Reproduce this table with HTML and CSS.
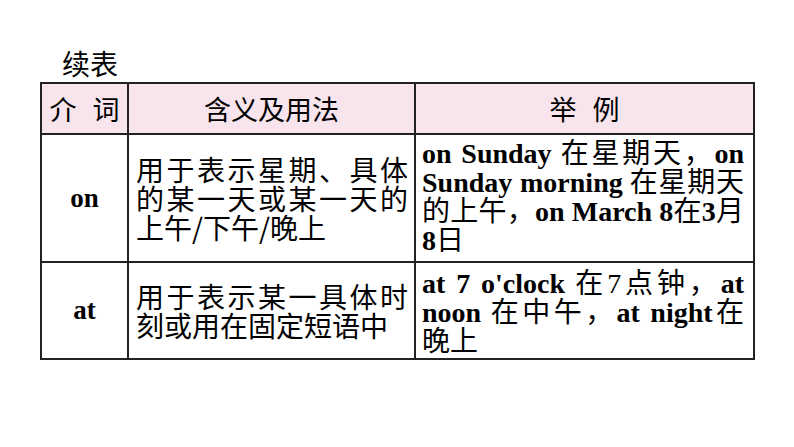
FILE: index.html
```html
<!DOCTYPE html>
<html lang="zh-CN">
<head>
<meta charset="utf-8">
<title>续表</title>
<link rel="stylesheet" href="styles.css">
</head>
<body>
<div class="page">
  <div class="title">续表</div>
  <div class="table">
    <div class="cell head">介 词</div>
    <div class="cell head">含义及用法</div>
    <div class="cell head">举 例</div>

    <div class="cell word">on</div>
    <div class="cell use"><p class="txt">用于表示星期、具体的某一天或某一天的上午/下午/晚上</p></div>
    <div class="cell ex ex1"><p class="txt"><b>on Sunday</b> 在星期天，<b>on Sunday morning</b> 在星期天的上午，<b>on March 8</b>在<b>3</b>月<b>8</b>日</p></div>

    <div class="cell word">at</div>
    <div class="cell use"><p class="txt">用于表示某一具体时刻或用在固定短语中</p></div>
    <div class="cell ex"><p class="txt"><b>at 7 o'clock</b> 在<span class="num">7</span>点钟，<b>at noon</b> 在中午，<b>at night</b>在晚上</p></div>
  </div>
</div>
</body>
</html>
```
FILE: styles.css
```css
html, body {
  margin: 0;
  padding: 0;
  background: #ffffff;
}

body {
  font-family: "Noto Sans CJK SC", "Noto Sans", sans-serif;
  color: #000000;
}

.page {
  padding: 48px 0 0 40px;
}

.title {
  padding-left: 22px;
  font-size: 28px;
  line-height: 30px;
  margin-bottom: 4px;
}

.table {
  display: grid;
  grid-template-columns: 87px 287px 339px;
  grid-template-rows: 51px 128px 97px;
  width: max-content;
  border-top: 2px solid #222222;
  border-left: 2px solid #222222;
}

.cell {
  box-sizing: border-box;
  border-right: 2px solid #222222;
  border-bottom: 2px solid #222222;
  display: flex;
  align-items: center;
}

.head {
  background: #f8e4ec;
  justify-content: center;
  font-size: 27px;
  line-height: 30px;
  word-spacing: 10px;
}

.word {
  justify-content: center;
  font-family: "Liberation Serif", "Times New Roman", serif;
  font-weight: bold;
  font-size: 27px;
  line-height: 29px;
}

.use {
  padding: 0 6px 0 7px;
}

.ex {
  padding: 0 9px 0 6px;
}

.ex1 {
  padding-bottom: 6px;
}

.txt {
  margin: 0;
  width: 100%;
  font-size: 28px;
  line-height: 29px;
  text-align: justify;
}

.txt b {
  font-family: "Liberation Serif", "Times New Roman", serif;
  font-weight: bold;
  line-height: 24px;
}

.txt .num {
  font-family: "Liberation Serif", "Times New Roman", serif;
  line-height: 24px;
}
```
